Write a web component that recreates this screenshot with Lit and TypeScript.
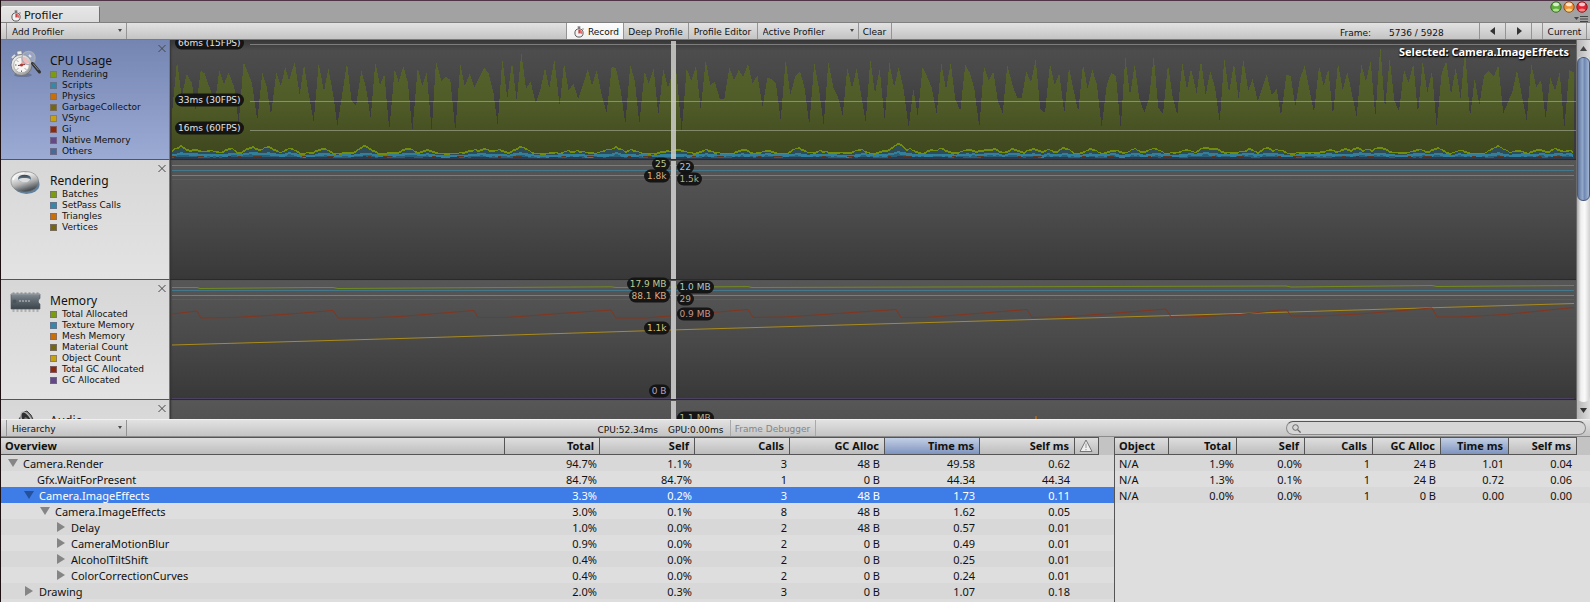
import { LitElement, html, svg, css, nothing } from "lit";
import { customElement, property, state } from "lit/decorators.js";
import { classMap } from "lit/directives/class-map.js";

type Pt = [number, number];

const GREEN = "#7a9c0e";
const BLUE = "#3588a7";
const ORANGE = "#c96f04";
const OLIVE = "#74680f";
const YELLOW = "#c6a20c";
const RED = "#8c2a0c";
const PURPLE = "#634a87";
const STEEL = "#476a97";

/* Frame cost samples, in chart units: x runs from 170 to 1576, y from 0 (top) to 119. */
const third = (dx: number, dy: number, list: number[]): Pt[] => {
  const out: Pt[] = [];
  for (let i = 0; i < list.length; i += 2) out.push([dx + list[i] / 3, dy + list[i + 1] / 3]);
  return out;
};

const COST: Pt[] = [
  ...third(0, -40, [516, 340, 531, 183, 545, 290, 560, 222, 576, 250, 587, 330, 602, 212, 614, 220, 637, 287, 645, 305, 658, 212, 672, 252, 686, 217, 703, 262, 716, 370, 731, 186, 756, 250, 772, 360, 787, 218, 800, 260, 813, 345, 829, 218, 842, 258, 856, 202, 867, 242, 884, 186, 899, 285, 912, 192, 925, 275, 941, 365, 956, 190, 972, 275, 985, 205, 1000, 285, 1012, 378, 1041, 188, 1055, 305, 1068, 318, 1084, 212, 1098, 262, 1112, 355, 1126, 188, 1140, 255, 1153, 222, 1168, 388, 1184, 208]),
  ...third(390, 0, [26, 127, 40, 78, 54, 130, 67, 275, 83, 85, 97, 137, 110, 98, 125, 272, 138, 63, 154, 122, 168, 110, 181, 120, 196, 272, 211, 72, 224, 138, 239, 102, 253, 143, 282, 83, 296, 100, 310, 155, 323, 255, 337, 57, 352, 175, 366, 65, 380, 183, 394, 38, 408, 145, 422, 125, 437, 190, 451, 150, 465, 83]),
  ...third(540, -40, [15, 203, 28, 265, 43, 178, 59, 318, 72, 190, 86, 272, 100, 250, 115, 297, 129, 255, 143, 208, 156, 258, 170, 210, 186, 290, 200, 338, 215, 200, 228, 205, 242, 270, 256, 372, 271, 195, 285, 245, 298, 372, 314, 213, 326, 250, 341, 205, 355, 345, 370, 207, 384, 265, 400, 205, 410, 222, 425, 395, 440, 205, 454, 243, 468, 197, 482, 328, 497, 182, 511, 255, 524, 245, 540, 298, 553, 297, 568, 203, 582, 240, 596, 210, 610, 230, 624, 192, 638, 252, 652, 225, 668, 320, 682, 233, 695, 237, 708, 252, 722, 360, 737, 180, 751, 285, 766, 228, 780, 213, 794, 265, 808, 375, 823, 188, 837, 268, 851, 375, 865, 187, 880, 262, 894, 290, 908, 347, 922, 203, 936, 265, 950, 205, 977, 365, 991, 178, 1005, 280, 1019, 207, 1034, 360, 1048, 187, 1062, 260, 1076, 203, 1090, 262, 1106, 383, 1120, 265, 1133, 347, 1148, 200, 1175, 262]),
  ...third(930, 0, [20, 223, 34, 68, 48, 150, 62, 68, 76, 178, 91, 212, 106, 75, 120, 100, 133, 145, 148, 262, 162, 78, 176, 122, 190, 95, 204, 185, 218, 220, 232, 75, 246, 130, 261, 173, 275, 175, 289, 93, 303, 128, 317, 57, 331, 208, 345, 218, 360, 72, 374, 135, 388, 100, 403, 220, 417, 83, 431, 152, 445, 215, 459, 72, 473, 147, 487, 88, 501, 135, 515, 262, 530, 135, 544, 98, 558, 108, 572, 265, 586, 50, 600, 167, 614, 73, 628, 175, 643, 218, 657, 175, 671, 48, 685, 203, 699, 222, 714, 72, 728, 172, 742, 225, 757, 68, 771, 150]),
  ...third(1190, -40, [3, 205, 20, 280, 33, 180, 47, 285, 61, 213, 75, 262, 89, 365, 103, 175, 117, 278, 132, 190, 146, 297, 160, 178, 175, 272, 188, 237, 203, 303, 230, 222, 245, 285, 260, 267, 273, 348, 289, 225, 302, 227, 316, 320, 330, 235, 344, 198, 372, 338, 387, 198, 401, 257, 415, 207, 429, 347, 444, 188, 458, 270, 472, 215, 500, 350, 514, 192, 528, 245, 542, 182, 556, 350, 571, 138, 585, 330, 599, 175, 613, 300, 627, 335, 642, 210, 656, 248, 670, 190, 684, 342, 698, 183, 712, 278, 726, 213, 740, 380, 755, 218, 769, 183, 783, 285, 797, 203, 812, 297, 825, 145, 840, 353, 854, 235, 868, 315, 882, 228, 896, 212, 911, 230, 925, 195, 940, 340, 967, 275, 981, 210, 1010, 362, 1024, 193, 1039, 262, 1053, 240, 1067, 355, 1081, 232, 1095, 272, 1109, 217, 1123, 385, 1138, 210, 1152, 218]),
];

/* Spikes of the rendering line above its resting height: position, rise. */
const SPIKES: Pt[] = [
  [181, 8], [195, 4], [210, 4], [230, 6], [252, 8], [268, 7], [290, 6], [323, 5], [365, 8], [408, 6], [427, 4], [474, 4], [484, 5], [499, 4], [521, 8],
  [569, 3], [578, 3], [607, 4], [616, 7], [630, 4], [666, 3], [677, 5], [706, 4], [743, 5], [767, 3], [798, 6], [820, 3], [861, 4], [885, 3], [898, 11],
  [910, 5], [932, 4], [942, 5], [968, 4], [986, 5], [993, 5], [1013, 6], [1033, 5], [1048, 3], [1064, 6], [1090, 4], [1113, 4], [1135, 5], [1154, 6],
  [1188, 4], [1205, 7], [1215, 6], [1249, 5], [1267, 6], [1276, 4], [1330, 4], [1345, 4], [1357, 7], [1367, 5], [1380, 7], [1418, 5], [1437, 6],
  [1460, 3], [1498, 8], [1518, 3], [1538, 4], [1556, 5], [1568, 3],
];

const noise = (n: number) => {
  const v = Math.sin(n * 12.9898) * 43758.5453;
  return v - Math.floor(v);
};

const ripple = (rest: number, gain: number, jitter: number, seed: number): Pt[] => {
  const out: Pt[] = [];
  for (let x = 172; x <= 1574; x += 3) {
    let rise = 0;
    for (const [px, h] of SPIKES) rise = Math.max(rise, h * (1 - Math.abs(x - px) / (h > 6 ? 13 : 11)));
    const slow = noise(Math.floor(x / 9) + seed);
    out.push([x, Math.round(rest - rise * gain - slow * jitter)]);
  }
  return out;
};

const RENDER = ripple(113, 0.9, 1, 1);
const OTHERS: Pt[] = RENDER.map(([x, y], i) => [x, y + (noise(i) > 0.7 ? 1 : 2)]);
const SCRIPTS = ripple(115, 0.3, 1, 9);
const DEEP: Pt[] = SCRIPTS.map(([x, y], i) => [x, Math.min(118, y + 2 + Math.round(noise(i + 3)))]);
const FLOOR = ripple(118, 0.1, 1, 5);

const line = (pts: Pt[]) => pts.map((p) => `${p[0].toFixed(1)},${p[1].toFixed(1)}`).join(" ");
const area = (pts: Pt[], base = 119) => `${pts[0][0]},${base} ${line(pts)} ${pts[pts.length - 1][0]},${base}`;

interface Series { color: string; points: Pt[]; }
interface Tag { side: "left" | "right"; y: number; text: string; color: string; }
interface Module {
  id: string; name: string; selected?: boolean;
  legend: [string, string][]; series: Series[]; tags: Tag[];
}

const flat = (y: number): Pt[] => [[172, y], [1574, y]];

const MODULES: Module[] = [
  {
    id: "cpu", name: "CPU Usage", selected: true,
    legend: [["Rendering", GREEN], ["Scripts", BLUE], ["Physics", ORANGE], ["GarbageCollector", OLIVE], ["VSync", YELLOW], ["Gi", RED], ["Native Memory", PURPLE], ["Others", STEEL]],
    series: [], tags: [],
  },
  {
    id: "rendering", name: "Rendering",
    legend: [["Batches", GREEN], ["SetPass Calls", BLUE], ["Triangles", ORANGE], ["Vertices", OLIVE]],
    series: [
      { color: "#76901e", points: flat(5.5) },
      { color: "#43788c", points: flat(10.5) },
      { color: "#b87020", points: flat(15.5) },
      { color: "#665f2c", points: flat(19.5) },
    ],
    tags: [
      { side: "left", y: 4, text: "25", color: "#bfcb92" },
      { side: "right", y: 7, text: "22", color: "#a2cad8" },
      { side: "left", y: 16, text: "1.8k", color: "#dcae7c" },
      { side: "right", y: 19, text: "1.5k", color: "#b5ae86" },
    ],
  },
  {
    id: "memory", name: "Memory",
    legend: [["Total Allocated", GREEN], ["Texture Memory", BLUE], ["Mesh Memory", ORANGE], ["Material Count", OLIVE], ["Object Count", YELLOW], ["Total GC Allocated", RED], ["GC Allocated", PURPLE]],
    series: [
      { color: "#728b1f", points: [[172, 7.5], [197, 7.5], [200, 8.5], [310, 7.5], [333, 7.5], [338, 8.5], [611, 6.8], [616, 7.5], [748, 6.6], [752, 7.5], [1286, 6], [1291, 7], [1432, 5.5], [1437, 6.5], [1574, 5.5]] },
      { color: "#43788c", points: flat(10.5) },
      { color: "#b87020", points: flat(15.5) },
      { color: "#665f2c", points: flat(19.5) },
      { color: "#a98b20", points: [[172, 65], [400, 58.5], [560, 53.5], [670, 50], [860, 44.5], [1190, 35], [1574, 23.5]] },
      { color: "#84351d", points: [[172, 34], [197, 31], [201, 38], [235, 37.5], [290, 34], [333, 30.5], [338, 38], [367, 38], [400, 36.5], [474, 30.5], [478, 37.5], [506, 37.5], [560, 33.5], [611, 30], [616, 38], [645, 38], [670, 36], [748, 29.5], [753, 37.5], [785, 37], [830, 34], [896, 29.5], [901, 37.5], [925, 37.5], [970, 34], [1027, 29.5], [1032, 37.5], [1060, 37], [1110, 33.5], [1166, 29], [1171, 37], [1190, 37], [1240, 34.5], [1280, 30], [1287, 30], [1291, 36], [1320, 36], [1360, 34], [1432, 28], [1437, 37], [1460, 37], [1505, 34.5], [1574, 27.5]] },
      { color: "#4d4161", points: flat(118.5) },
    ],
    tags: [
      { side: "left", y: 4, text: "17.9 MB", color: "#bfcb92" },
      { side: "right", y: 7, text: "1.0 MB", color: "#a2cad8" },
      { side: "left", y: 16, text: "88.1 KB", color: "#dcae7c" },
      { side: "right", y: 19, text: "29", color: "#b5ae86" },
      { side: "right", y: 34, text: "0.9 MB", color: "#c7978a" },
      { side: "left", y: 48, text: "1.1k", color: "#d9c77e" },
      { side: "left", y: 111, text: "0 B", color: "#aea3c2" },
    ],
  },
  {
    id: "audio", name: "Audio",
    legend: [],
    series: [{ color: "#a96d28", points: [[1035, 22], [1036, 16], [1037, 22]] }],
    tags: [{ side: "right", y: 18, text: "1.1 MB", color: "#b5ae86" }],
  },
];

const stopwatch = (size: number) => html`<svg width=${size} height=${size} viewBox="0 0 12 12" aria-hidden="true">
  <path d="M4.6 1h2.800M6 1v2M9.600 2.600l.8.8" stroke="#555" stroke-width="1.100" fill="none" />
  <circle cx="6" cy="7" r="4.100" fill="#f2f2f2" stroke="#5e5e5e" stroke-width="1" />
  <path d="M6 7V3.600A3.400 3.400 0 0 1 9.200 8z" fill="#e86a6a" />
  <path d="M6 7.500V4" stroke="#aa2222" stroke-width="1" />
</svg>`;

const ICONS: Record<string, unknown> = {
  cpu: svg`
    <defs><linearGradient id="c1" x1="0" y1="0" x2="1" y2="1"><stop offset="0" stop-color="#fff" /><stop offset="1" stop-color="#8b8b8b" /></linearGradient></defs>
    <ellipse cx="13" cy="25" rx="9" ry="2" fill="#000" opacity=".18" />
    <rect x="7" y="1" width="5" height="4" rx="1" fill="#ededed" stroke="#777" stroke-width=".7" transform="rotate(-6 9 3)" />
    <path d="M2 8l3-3M19 5l2 2" stroke="#ddd" stroke-width="2" />
    <circle cx="11.500" cy="15" r="10.500" fill="url(#c1)" stroke="#6f6f6f" stroke-width=".8" />
    <circle cx="11.500" cy="15" r="7.800" fill="#f7f5f3" stroke="#a8a8a8" stroke-width=".8" />
    <path d="M11.500 15V7.200A7.800 7.800 0 0 1 19 13z" fill="#eea6a6" />
    <g stroke="#555" stroke-width=".9"><path d="M11.500 20.500v1.500M5 15h1.500M7 10.500l1 1M7 19.500l1-1M16 19.500l-1-1" /></g>
    <path d="M8 15.500l7-1" stroke="#803030" stroke-width="1.200" /><circle cx="11.500" cy="15" r="1.500" fill="#b03838" />
    <circle cx="18.500" cy="8" r="6.600" fill="#fff" fill-opacity=".22" stroke="#a9adb5" stroke-width="1.300" />
    <path d="M22.500 13.500l7 8.500" stroke="#333" stroke-width="3" stroke-linecap="round" />
    <path d="M23 13.600l5.500 6.500" stroke="#999" stroke-width=".8" />`,
  rendering: svg`
    <defs><linearGradient id="r1" x1="0" y1="0" x2=".4" y2="1"><stop offset="0" stop-color="#a2a2a2" /><stop offset=".3" stop-color="#efefef" /><stop offset=".65" stop-color="#b4b4b4" /><stop offset="1" stop-color="#4b5258" /></linearGradient>
    <linearGradient id="r2" x1="0" y1="0" x2="0" y2="1"><stop offset="0" stop-color="#39424a" /><stop offset="1" stop-color="#7fa8ca" /></linearGradient></defs>
    <ellipse cx="16.500" cy="14.500" rx="13" ry="9.500" fill="#35648e" opacity=".75" />
    <path fill="url(#r1)" stroke="#777b7e" stroke-width=".6" d="M1 11C1 5 7 1.500 15 1.500S28.500 5.500 28.500 11.500 23 22 15 22 1 18 1 11z" />
    <ellipse cx="14.500" cy="8.500" rx="6.500" ry="3.800" fill="url(#r2)" />
    <path d="M8.500 9.500c2 3.500 9.500 4 12 0-2.500-1.800-9.500-2-12 0z" fill="#dcdcdc" />
    <path d="M3 10c1-4.500 5.500-7 11.500-7" stroke="#fff" stroke-width="1.300" fill="none" opacity=".8" />`,
  memory: svg`
    <defs><linearGradient id="m1" x1="0" y1="0" x2="0" y2="1"><stop offset="0" stop-color="#838d93" /><stop offset=".45" stop-color="#5d676d" /><stop offset="1" stop-color="#3b444a" /></linearGradient></defs>
    <path d="M3.500 2v20M7.500 2v20M11.500 2v20M15.500 2v20M19.500 2v20M23.500 2v20M27.500 2v20" stroke="#b0b0b0" stroke-width="2" />
    <path d="M1 4h29v4.500a3 3 0 0 0 0 5.500V19H1z" fill="url(#m1)" stroke="#4c555b" stroke-width=".6" />
    <path d="M1 4.500h29" stroke="#8b959b" /><circle cx="4.500" cy="11.500" r="2" fill="#4a5358" />
    <path d="M9 11h12" stroke="#8f999f" stroke-width="2" stroke-dasharray="2 1" />`,
  audio: svg`
    <path d="M9 9l5-7 3-1 4 4 6 13-4 8-12-3z" fill="#727272" stroke="#3f3f3f" />
    <ellipse cx="17" cy="11" rx="4.500" ry="10" transform="rotate(-28 17 11)" fill="#2f2f2f" stroke="#b8b8b8" stroke-width="1.300" />
    <ellipse cx="17.500" cy="12" rx="2" ry="5" transform="rotate(-28 17 12)" fill="#757575" />`,
};

@customElement("profiler-chart")
class ProfilerChart extends LitElement {
  @property({ attribute: false }) module!: Module;

  static styles = css`
    :host { display: block; position: relative; background: linear-gradient(#575757, #4b4b4b 45%, #383838); border-bottom: 1px solid #2a2a2a; box-shadow: inset 2px 0 2px -1px #333; }
    :host([kind="cpu"]) { background: linear-gradient(#363636, #4d4d4d 9%, #484848 30%, #3c3b3f 60%, #38373c); }
    .plot { display: block; width: 100%; height: 100%; }
    .head { position: absolute; top: 1px; bottom: 0; left: 35.6%; width: 5px; background: #bfbfbf; }
    .head.over { background: rgba(205, 205, 200, 0.86); }
    .tag, .scale { position: absolute; font: 9px/13px "DejaVu Sans", sans-serif; height: 13px; padding: 0 3px; border-radius: 7px; background: rgba(18, 18, 18, 0.95); white-space: nowrap; transform: translateY(-50%); }
    .tag { margin-top: -1px; }
    .left { right: 6px; }
    .right { left: 6px; }
    .scale { left: 5px; color: #e4e4e4; }
    .selected { position: absolute; top: 4px; right: 7px; font: bold 11px/15px "Noto Sans", sans-serif; color: #fff; text-shadow: 1px 1px 1px #000, 0 1px 2px #000; }
  `;

  private cpu() {
    return svg`
      <defs><linearGradient id="g" x1="0" y1="0" x2="0" y2="1"><stop offset="0" stop-color="#59652d" /><stop offset=".5" stop-color="#505c28" /><stop offset="1" stop-color="#3d451d" /></linearGradient></defs>
      <polygon points=${area(COST)} fill="url(#g)" />
      <path d="M250 4.500H1576M250 61.500H1576M250 90.500H1576" stroke="#fff" stroke-opacity=".32" />
      <polygon points=${area(RENDER)} fill="#748d09" />
      <polygon points=${area(OTHERS)} fill="#2f4d58" />
      <polygon points=${area(SCRIPTS)} fill="#327f9c" />
      <polygon points=${area(DEEP)} fill="#2c5f75" />
      <polygon points=${area(FLOOR)} fill="#2e3a4d" />
      <path d="M172 116.500H1574" stroke="#5c3722" stroke-dasharray="4 21 7 34 3 12 9 40" />`;
  }

  render() {
    const m = this.module;
    const cpu = m.id === "cpu";
    return html`
      <svg class="plot" viewBox="170 0 1406 119" preserveAspectRatio="none" shape-rendering=${cpu ? "crispEdges" : "auto"} aria-hidden="true">
        ${cpu ? this.cpu() : m.series.map((s) => svg`<polyline points=${line(s.points)} fill="none" stroke=${s.color} stroke-width="1" />`)}
      </svg>
      <div class=${classMap({ head: true, over: cpu })}>
        ${m.tags.map((t) => html`<span class="tag ${t.side}" style="top:${t.y}px;color:${t.color}">${t.text}</span>`)}
      </div>
      ${cpu ? html`
        ${[["66ms (15FPS)", 3], ["33ms (30FPS)", 60], ["16ms (60FPS)", 88]].map(([t, y]) => html`<span class="scale" style="top:${y}px">${t}</span>`)}
        <span class="selected">Selected: Camera.ImageEffects</span>` : nothing}
    `;
  }
}

interface Row { depth: number; open?: boolean; name: string; cells: string[]; }

const ROWS: Row[] = [
  { depth: 0, open: true, name: "Camera.Render", cells: ["94.7%", "1.1%", "3", "48 B", "49.58", "0.62"] },
  { depth: 1, name: "Gfx.WaitForPresent", cells: ["84.7%", "84.7%", "1", "0 B", "44.34", "44.34"] },
  { depth: 1, open: true, name: "Camera.ImageEffects", cells: ["3.3%", "0.2%", "3", "48 B", "1.73", "0.11"] },
  { depth: 2, open: true, name: "Camera.ImageEffects", cells: ["3.0%", "0.1%", "8", "48 B", "1.62", "0.05"] },
  { depth: 3, open: false, name: "Delay", cells: ["1.0%", "0.0%", "2", "48 B", "0.57", "0.01"] },
  { depth: 3, open: false, name: "CameraMotionBlur", cells: ["0.9%", "0.0%", "2", "0 B", "0.49", "0.01"] },
  { depth: 3, open: false, name: "AlcoholTiltShift", cells: ["0.4%", "0.0%", "2", "0 B", "0.25", "0.01"] },
  { depth: 3, open: false, name: "ColorCorrectionCurves", cells: ["0.4%", "0.0%", "2", "0 B", "0.24", "0.01"] },
  { depth: 1, open: false, name: "Drawing", cells: ["2.0%", "0.3%", "3", "0 B", "1.07", "0.18"] },
];

const OBJECTS = [
  ["N/A", "1.9%", "0.0%", "1", "24 B", "1.01", "0.04"],
  ["N/A", "1.3%", "0.1%", "1", "24 B", "0.72", "0.06"],
  ["N/A", "0.0%", "0.0%", "1", "0 B", "0.00", "0.00"],
];

const HEADS = ["Total", "Self", "Calls", "GC Alloc", "Time ms", "Self ms"];

@customElement("app-root")
class AppRoot extends LitElement {
  @state() private selected = 2;

  static styles = css`
    :host { display: flex; flex-direction: column; box-sizing: border-box; height: 100vh; overflow: hidden; border-left: 1px solid #1d1013; background: #a2a2a2; font: 9px/12px "DejaVu Sans", sans-serif; color: #111; }
    * { box-sizing: border-box; }
    button, select, input { margin: 0; padding: 0; border: 0; border-radius: 0; background: none; font: inherit; color: inherit; appearance: none; outline: none; }
    svg { display: block; }

    .titlebar { flex: none; display: flex; justify-content: space-between; align-items: flex-end; height: 23px; border-top: 1px solid #4f3346; border-bottom: 1px solid #808080; }
    .tab { display: flex; align-items: center; gap: 2px; width: 99px; height: 16px; padding: 2px 0 0 9px; font-size: 11px; border-right: 1px solid #6f6f6f; border-top: 1px solid #f2f2f2; border-radius: 2px 2px 0 0; background: linear-gradient(#e6e6e6, #dcdcdc); }
    .controls { align-self: stretch; display: flex; flex-direction: column; align-items: flex-end; gap: 3px; padding: 0 2px; }
    .lights { display: flex; gap: 1px; }

    .bar { flex: none; display: flex; align-items: stretch; height: 17px; padding-left: 5px; background: linear-gradient(#e2e2e2, #c4c4c4); }
    .bar.top { border-bottom: 1px solid #7a7a7a; }
    .spacer { flex: 1; }
    .pick { position: relative; display: flex; width: 121px; border: solid #949494; border-width: 0 1px; }
    .pick.active { width: 101px; border-left: 0; }
    .pick select { flex: 1; padding: 2px 0 0 5px; }
    .pick::after { content: ""; position: absolute; right: 4px; top: 6px; border: 2px solid transparent; border-top: 3px solid #4a4a4a; pointer-events: none; }
    .btn { display: flex; align-items: center; justify-content: center; padding-top: 2px; border-right: 1px solid #949494; }
    .record { width: 58px; gap: 3px; padding-left: 3px; border-left: 1px solid #949494; background: linear-gradient(#fdfdfd, #f0f0f0); }
    .deep { width: 65px; }
    .editor { width: 69px; }
    .clear { width: 33px; }
    .step { width: 26px; padding: 0; }
    .current { width: 45px; margin-right: 3px; border-left: 1px solid #949494; }
    .frame { display: flex; align-items: center; gap: 18px; width: 150px; padding: 3px 0 0 10px; border-right: 1px solid #949494; }
    .gap { width: 10px; }

    .charts { flex: 1; min-height: 0; display: grid; grid-template-columns: 169px 1fr 14px; background: #555; }
    .modules { min-height: 0; overflow: hidden; display: grid; grid-column: 1 / 3; grid-template-columns: subgrid; grid-auto-rows: 120px; align-content: start; }
    .module { display: grid; grid-template-columns: 32px 1fr 8px; column-gap: 8px; padding: 3px 3px 0 9px; border-bottom: 1px solid #555; border-right: 1px solid #777; background: linear-gradient(#d7d7d7, #e3e3e3); }
    .module.on { background: linear-gradient(#7585b2, #9babd4); }
    .icon { padding-top: 7px; }
    .name { margin: 10px 0 0; font: 12px/16px "Noto Sans", sans-serif; }
    .legend { list-style: none; margin: 0; padding: 0; line-height: 11px; }
    .legend li { display: flex; align-items: center; gap: 5px; white-space: nowrap; }
    .swatch { width: 7px; height: 7px; border: 1px solid rgba(120, 110, 130, 0.7); }
    .close { height: 10px; }

    .scroll { display: flex; flex-direction: column; border-left: 1px solid #6a6a6a; background: linear-gradient(90deg, #b4b4b4, #dedede); }
    .arrow { flex: none; display: grid; place-items: center; height: 17px; }
    .track { flex: 1; padding-bottom: 1px; border-radius: 0 0 6px 6px; background: linear-gradient(90deg, #a8a8a8, #efefef 30%, #fafafa 60%, #cfcfcf); }
    .thumb { height: 42%; border: 1px solid #47587a; border-radius: 6px; background: linear-gradient(90deg, #5d7196, #93a9cc 40%, #7088b2 60%, #a3b6d4); }

    .details { flex: none; display: flex; flex-direction: column; height: 183px; }
    .details .bar { height: 18px; border-top: 1px solid #f0f0f0; border-bottom: 1px solid #8c8c8c; }
    .stats { display: flex; align-items: center; gap: 10px; padding: 3px 6px 0 0; }
    .debugger { width: 86px; border-left: 1px solid #a9a9a9; border-color: #a9a9a9; color: #858585; }
    .search { display: flex; align-items: center; gap: 3px; width: 300px; height: 14px; margin: 1px 4px 0 0; padding-left: 5px; border: 1px solid #8a8a8a; border-top-color: #555; border-radius: 7px; background: #d6d6d6; }
    .search input { flex: 1; min-width: 0; }

    .panes { flex: 1; min-height: 0; display: grid; grid-template-columns: minmax(0, 1fr) 476px; background: #dedede; font: 11px/16px "Noto Sans", sans-serif; }
    .pane { min-width: 0; overflow: hidden; background: linear-gradient(#c3c3c3, #c3c3c3) no-repeat 0 0 / 100% 18px; }
    .pane + .pane { border-left: 1px solid #555; }
    table { width: 100%; table-layout: fixed; border-collapse: separate; border-spacing: 0; }
    th, td { height: 16px; padding: 0 3px; text-align: right; white-space: nowrap; line-height: 15px; }
    th { height: 18px; padding: 0 5px; font-weight: bold; line-height: 14px; border: solid #555; border-width: 1px 1px 1px 0; background: linear-gradient(#dedede, #bdbdbd); }
    th:first-child, td:first-child { text-align: left; padding-left: 4px; }
    th.sort { background: linear-gradient(#c3cfe4, #7e94bf); }
    th.blank { border: 0; background: none; }
    th.warn { padding: 0 4px; }
    td:nth-child(n + 5) { padding-right: 5px; }
    tr:nth-child(odd) td { background: #d8d8d8; }
    tr:nth-child(even) td { background: #dedede; }
    tr.on td { background: #3e7de7; color: #fff; }
    .c-stat { width: 95px; }
    .c-warn { width: 24px; }
    .c-end { width: 15px; }
    .c-obj { width: 54px; }
    .c-bar { width: 13px; }
    .tree { display: flex; align-items: center; gap: 5px; }
    .leaf { padding-left: 13px; }
    .fold { flex: none; width: 10px; height: 10px; fill: #858585; }
    tr.on .fold { fill: #24509c; }
  `;

  private modulePanel(m: Module) {
    return html`
      <section class=${classMap({ module: true, on: !!m.selected })}>
        <div class="icon"><svg width="32" height="28" viewBox="0 0 32 28" aria-hidden="true">${ICONS[m.id]}</svg></div>
        <div>
          <h2 class="name">${m.name}</h2>
          <ul class="legend">${m.legend.map(([t, c]) => html`<li><span class="swatch" style="background:${c}"></span>${t}</li>`)}</ul>
        </div>
        <button class="close" aria-label="Remove ${m.name}"><svg width="8" height="10" viewBox="0 0 8 10"><path d="M.5 2l7 7M7.500 2l-7 7" stroke="#444" fill="none" /></svg></button>
      </section>
      <profiler-chart kind=${m.id} .module=${m}></profiler-chart>`;
  }

  private light(c: string, hi: string, ring: string, label: string) {
    return html`<button aria-label=${label}><svg width="12" height="12" viewBox="0 0 12 12">
      <circle cx="6" cy="6" r="5.200" fill=${c} stroke=${ring} />
      <ellipse cx="6" cy="3.400" rx="3" ry="1.800" fill="#fff" opacity=".75" />
      <ellipse cx="6" cy="9" rx="3" ry="1.500" fill=${hi} opacity=".8" />
    </svg></button>`;
  }

  render() {
    return html`
      <header class="titlebar">
        <div class="tab">${stopwatch(12)}<span>Profiler</span></div>
        <div class="controls">
          <div class="lights">
            ${this.light("#5fae3b", "#c2f0a0", "#3c6a2c", "Minimize")}
            ${this.light("#ee9038", "#ffe58a", "#8a4f1c", "Zoom")}
            ${this.light("#e02432", "#ff9a9a", "#8a1820", "Close")}
          </div>
          <button aria-label="Tab menu"><svg width="14" height="6" viewBox="0 0 14 6"><path d="M0 1h5L2.500 4z" fill="#444" /><path d="M6 .5h8M6 3h8M6 5.500h8" stroke="#444" /></svg></button>
        </div>
      </header>

      <nav class="bar top">
        <label class="pick"><select aria-label="Add Profiler"><option>Add Profiler</option></select></label>
        <span class="spacer"></span>
        <button class="btn record">${stopwatch(12)}Record</button>
        <button class="btn deep">Deep Profile</button>
        <button class="btn editor">Profile Editor</button>
        <label class="pick active"><select aria-label="Active Profiler"><option>Active Profiler</option></select></label>
        <button class="btn clear">Clear</button>
        <span class="spacer"></span>
        <div class="frame"><span>Frame:</span><span>5736 / 5928</span></div>
        <button class="btn step" aria-label="Previous frame"><svg width="6" height="8" viewBox="0 0 6 8"><path d="M5 0v8L0 4z" fill="#333" /></svg></button>
        <button class="btn step" aria-label="Next frame"><svg width="6" height="8" viewBox="0 0 6 8"><path d="M1 0v8l5-4z" fill="#333" /></svg></button>
        <span class="gap"></span>
        <button class="btn current">Current</button>
      </nav>

      <main class="charts">
        <div class="modules">${MODULES.map((m) => this.modulePanel(m))}</div>
        <div class="scroll">
          <button class="arrow" aria-label="Scroll up"><svg width="7" height="5" viewBox="0 0 7 5"><path d="M0 5h7L3.500 0z" fill="#444" /></svg></button>
          <div class="track"><div class="thumb"></div></div>
          <button class="arrow" aria-label="Scroll down"><svg width="7" height="5" viewBox="0 0 7 5"><path d="M0 0h7L3.500 5z" fill="#333" /></svg></button>
        </div>
      </main>

      <section class="details">
        <div class="bar">
          <label class="pick"><select aria-label="View"><option>Hierarchy</option></select></label>
          <span class="spacer"></span>
          <div class="stats"><span>CPU:52.34ms</span><span>GPU:0.00ms</span></div>
          <button class="btn debugger" disabled>Frame Debugger</button>
          <span class="spacer"></span>
          <label class="search">
            <svg width="9" height="9" viewBox="0 0 9 9" aria-hidden="true"><circle cx="3.500" cy="3.500" r="2.800" fill="none" stroke="#666" /><path d="M5.600 5.600L8.600 8.600" stroke="#666" stroke-width="1.300" /></svg>
            <input type="search" aria-label="Search" />
          </label>
        </div>
        <div class="panes">
          <div class="pane">
            <table>
              <colgroup><col />${HEADS.map(() => html`<col class="c-stat" />`)}<col class="c-warn" /><col class="c-end" /></colgroup>
              <thead><tr>
                <th>Overview</th>
                ${HEADS.map((h) => html`<th class=${classMap({ sort: h === "Time ms" })}>${h}</th>`)}
                <th class="warn"><svg width="14" height="14" viewBox="0 0 14 14" role="img" aria-label="Warnings"><path d="M7 1L13 12.500H1z" fill="#efefef" stroke="#777" stroke-linejoin="round" /><path d="M7 4.500v4.500M7 10v1.300" stroke="#aaa" stroke-width="1.300" /></svg></th>
                <th class="blank"></th>
              </tr></thead>
              <tbody>
                ${ROWS.map((r, i) => html`<tr class=${classMap({ on: i === this.selected })} @click=${() => (this.selected = i)}>
                  <td><div class=${classMap({ tree: true, leaf: r.open === undefined })} style="margin-left:${r.depth * 16 + 3}px">
                    ${r.open === undefined ? nothing : html`<svg class="fold" viewBox="0 0 10 10" aria-hidden="true"><path d=${r.open ? "M0 1h10L5 9z" : "M1 0v10l8-5z"} /></svg>`}
                    <span>${r.name}</span>
                  </div></td>
                  ${r.cells.map((c) => html`<td>${c}</td>`)}
                  <td></td><td></td>
                </tr>`)}
              </tbody>
            </table>
          </div>
          <div class="pane">
            <table>
              <colgroup><col class="c-obj" />${HEADS.map(() => html`<col />`)}<col class="c-bar" /></colgroup>
              <thead><tr>
                <th>Object</th>
                ${HEADS.map((h) => html`<th class=${classMap({ sort: h === "Time ms" })}>${h}</th>`)}
                <th class="blank"></th>
              </tr></thead>
              <tbody>${OBJECTS.map((r) => html`<tr>${r.map((c) => html`<td>${c}</td>`)}<td></td></tr>`)}</tbody>
            </table>
          </div>
        </div>
      </section>
    `;
  }
}
